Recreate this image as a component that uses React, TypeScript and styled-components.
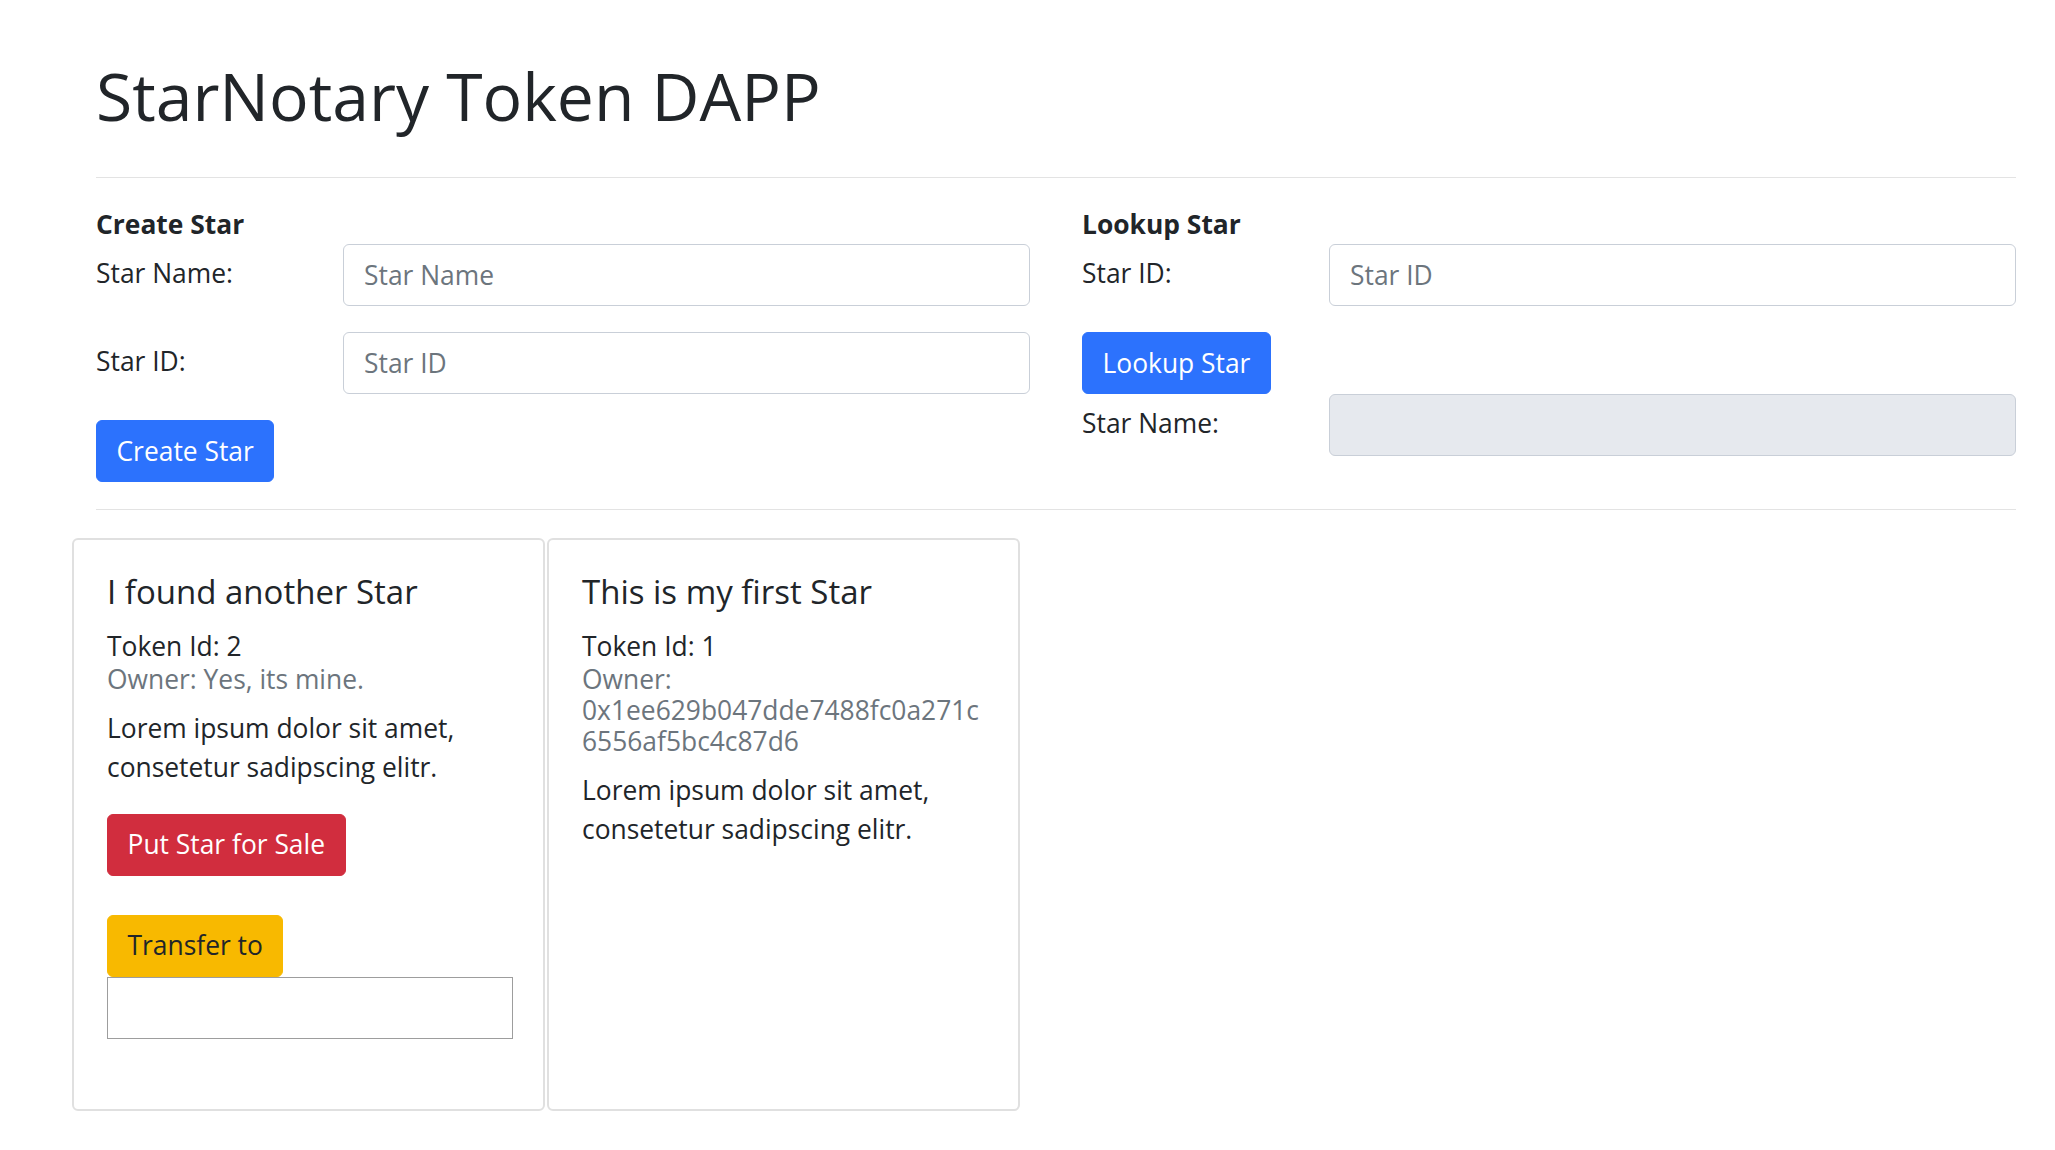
import React from "react";
import styled, { createGlobalStyle, css } from "styled-components";

const GlobalStyle = createGlobalStyle`
  html, body {
    margin: 0;
    padding: 0;
    background: #ffffff;
  }
  body {
    font-family: "Open Sans", "Liberation Sans", sans-serif;
    font-size: 26.4px;
    line-height: 1.5;
    color: #212529;
  }
  * { box-sizing: border-box; }
`;

const Page = styled.main`
  width: 2016px;
  padding: 56px 0 40px 96px;
`;

const Title = styled.h1`
  margin: 0;
  font-size: 66px;
  font-weight: 400;
  line-height: 78px;
  color: #212529;
`;

const Rule = styled.hr<{ $top: number; $bottom: number }>`
  border: 0;
  border-top: 1px solid #e3e3e3;
  height: 0;
  margin: ${(p) => p.$top}px 0 ${(p) => p.$bottom}px;
`;

const Forms = styled.section`
  display: grid;
  grid-template-columns: 1fr 1fr;
  column-gap: 52px;
  align-items: start;
`;

const Panel = styled.div`
  display: flex;
  flex-direction: column;
  align-items: flex-start;
`;

const PanelHeading = styled.div`
  font-weight: 700;
  line-height: 40px;
  height: 40px;
`;

const FieldRow = styled.div<{ $spaced?: boolean }>`
  display: grid;
  grid-template-columns: 247px 1fr;
  align-items: start;
  width: 100%;
  margin-bottom: ${(p) => (p.$spaced ? 26 : 0)}px;
`;

const FieldLabel = styled.label`
  padding-top: 10px;
  line-height: 39px;
`;

const TextInput = styled.input`
  width: 100%;
  height: 62px;
  padding: 0 20px;
  font-family: inherit;
  font-size: 26.4px;
  color: #212529;
  background: ${(p) => (p.readOnly ? "#e6e9ee" : "#ffffff")};
  border: 1px solid #c9cfd8;
  border-radius: 6px;
  outline: none;
  &::placeholder {
    color: #6c757d;
  }
`;

const variants = {
  primary: css`
    background: #2c72fd;
    border-color: #2c72fd;
    color: #ffffff;
  `,
  danger: css`
    background: #d12d3e;
    border-color: #d12d3e;
    color: #ffffff;
  `,
  warning: css`
    background: #f8b900;
    border-color: #f8b900;
    color: #212529;
  `,
};

const Button = styled.button<{ $variant: keyof typeof variants; $after?: number }>`
  height: 62px;
  padding: 0 19.5px;
  font-family: inherit;
  font-size: 26.4px;
  line-height: 39px;
  border: 1px solid transparent;
  border-radius: 6px;
  cursor: pointer;
  white-space: nowrap;
  margin-bottom: ${(p) => p.$after ?? 0}px;
  ${(p) => variants[p.$variant]}
`;

const CardRow = styled.section`
  display: flex;
  align-items: stretch;
  gap: 2px;
  margin-left: -24px;
`;

const StarCard = styled.article`
  width: 473px;
  border: 2px solid #e0e0e0;
  border-radius: 6px;
  padding: 32px 33px 32px 33px;
  overflow-wrap: break-word;
  word-wrap: break-word;
  display: flex;
  flex-direction: column;
  align-items: flex-start;
`;

const CardTitle = styled.h5`
  margin: 0 0 19.5px;
  font-size: 33px;
  font-weight: 400;
  line-height: 39px;
`;

const TokenLine = styled.div`
  line-height: 31px;
  margin-bottom: 2px;
`;

const OwnerLine = styled.div`
  color: #6c757d;
  line-height: 31px;
  margin-bottom: 14px;
  width: 100%;
`;

const CardText = styled.p`
  margin: 0 0 27px;
  line-height: 39px;
`;

const TransferInput = styled.input`
  width: 406px;
  height: 62px;
  margin-bottom: 38px;
  font-family: inherit;
  font-size: 26.4px;
  border: 1px solid #9d9d9d;
  border-radius: 0;
  padding: 0 6px;
  outline: none;
`;

type Star = {
  name: string;
  tokenId: number;
  owner: string;
  mine: boolean;
};

const stars: Star[] = [
  { name: "I found another Star", tokenId: 2, owner: "Yes, its mine.", mine: true },
  {
    name: "This is my first Star",
    tokenId: 1,
    owner: "0x1ee629b047dde7488fc0a271c6556af5bc4c87d6",
    mine: false,
  },
];

export default function App() {
  return (
    <>
      <GlobalStyle />
      <Page>
        <Title>StarNotary Token DAPP</Title>
        <Rule $top={43} $bottom={26} />
        <Forms>
          <Panel>
            <PanelHeading>Create Star</PanelHeading>
            <FieldRow $spaced>
              <FieldLabel>Star Name:</FieldLabel>
              <TextInput placeholder="Star Name" />
            </FieldRow>
            <FieldRow $spaced>
              <FieldLabel>Star ID:</FieldLabel>
              <TextInput placeholder="Star ID" />
            </FieldRow>
            <Button $variant="primary">Create Star</Button>
          </Panel>
          <Panel>
            <PanelHeading>Lookup Star</PanelHeading>
            <FieldRow $spaced>
              <FieldLabel>Star ID:</FieldLabel>
              <TextInput placeholder="Star ID" />
            </FieldRow>
            <Button $variant="primary">Lookup Star</Button>
            <FieldRow>
              <FieldLabel>Star Name:</FieldLabel>
              <TextInput readOnly />
            </FieldRow>
          </Panel>
        </Forms>
        <Rule $top={27} $bottom={28} />
        <CardRow>
          {stars.map((s) => (
            <StarCard key={s.tokenId}>
              <CardTitle>{s.name}</CardTitle>
              <TokenLine>Token Id: {s.tokenId}</TokenLine>
              <OwnerLine>Owner: {s.owner}</OwnerLine>
              <CardText>
                Lorem ipsum dolor sit amet,
                <br />
                consetetur sadipscing elitr.
              </CardText>
              {s.mine && (
                <>
                  <Button $variant="danger" $after={39}>
                    Put Star for Sale
                  </Button>
                  <Button $variant="warning">Transfer to</Button>
                  <TransferInput />
                </>
              )}
            </StarCard>
          ))}
        </CardRow>
      </Page>
    </>
  );
}
